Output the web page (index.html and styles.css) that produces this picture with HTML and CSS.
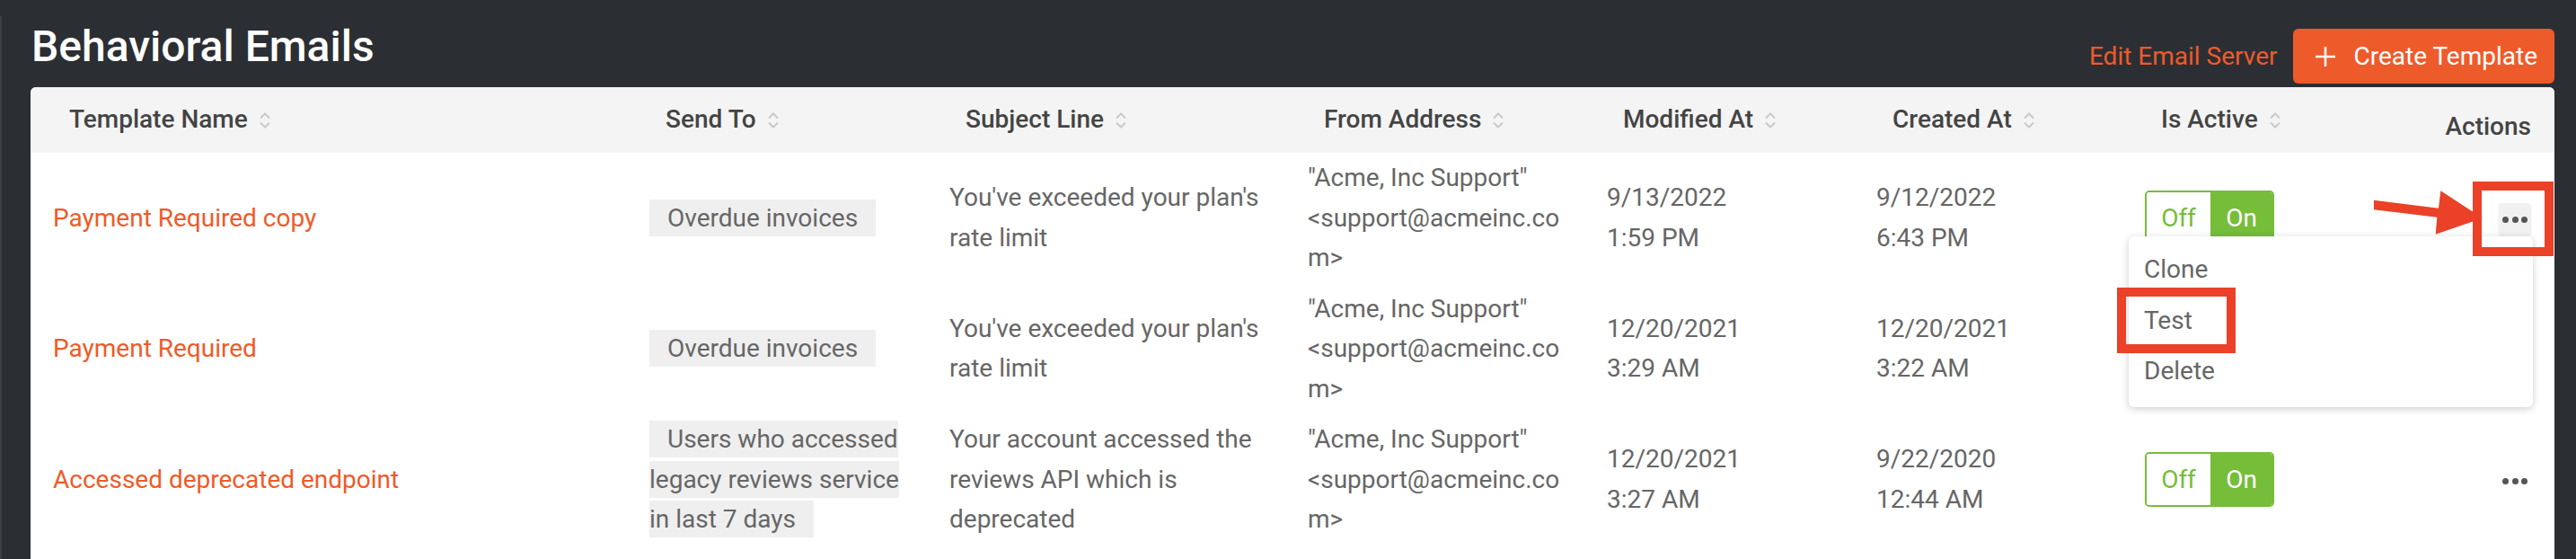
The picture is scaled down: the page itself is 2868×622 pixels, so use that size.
FILE: index.html
```html
<!DOCTYPE html>
<html lang="en">
<head>
<meta charset="utf-8">
<title>Behavioral Emails</title>
<link rel="stylesheet" href="styles.css">
</head>
<body>
<div class="app">
  <div class="rail"></div>
  <main class="main">
    <header class="topbar">
      <h1 class="title">Behavioral Emails</h1>
      <div class="top-actions">
        <a class="edit-link" href="#">Edit Email Server</a>
        <button class="btn-create" type="button">
          <svg class="plus" width="24" height="24" viewBox="0 0 24 24"><path d="M12 1v22M1 12h22" stroke="#fff" stroke-width="2.6" fill="none"/></svg>
          <span>Create Template</span>
        </button>
      </div>
    </header>

    <section class="card">
      <table class="grid">
        <colgroup>
          <col class="c-name"><col class="c-send"><col class="c-subject"><col class="c-from">
          <col class="c-mod"><col class="c-created"><col class="c-active"><col class="c-actions">
        </colgroup>
        <thead>
          <tr>
            <th>Template Name<svg class="sort" width="14" height="22" viewBox="0 0 14 22"><path d="M2 8.5L7 3.5L12 8.5M2 13.5L7 18.5L12 13.5" stroke="#c9c9c9" stroke-width="2" fill="none"/></svg></th>
            <th>Send To<svg class="sort" width="14" height="22" viewBox="0 0 14 22"><path d="M2 8.5L7 3.5L12 8.5M2 13.5L7 18.5L12 13.5" stroke="#c9c9c9" stroke-width="2" fill="none"/></svg></th>
            <th>Subject Line<svg class="sort" width="14" height="22" viewBox="0 0 14 22"><path d="M2 8.5L7 3.5L12 8.5M2 13.5L7 18.5L12 13.5" stroke="#c9c9c9" stroke-width="2" fill="none"/></svg></th>
            <th>From Address<svg class="sort" width="14" height="22" viewBox="0 0 14 22"><path d="M2 8.5L7 3.5L12 8.5M2 13.5L7 18.5L12 13.5" stroke="#c9c9c9" stroke-width="2" fill="none"/></svg></th>
            <th>Modified At<svg class="sort" width="14" height="22" viewBox="0 0 14 22"><path d="M2 8.5L7 3.5L12 8.5M2 13.5L7 18.5L12 13.5" stroke="#c9c9c9" stroke-width="2" fill="none"/></svg></th>
            <th>Created At<svg class="sort" width="14" height="22" viewBox="0 0 14 22"><path d="M2 8.5L7 3.5L12 8.5M2 13.5L7 18.5L12 13.5" stroke="#c9c9c9" stroke-width="2" fill="none"/></svg></th>
            <th>Is Active<svg class="sort" width="14" height="22" viewBox="0 0 14 22"><path d="M2 8.5L7 3.5L12 8.5M2 13.5L7 18.5L12 13.5" stroke="#c9c9c9" stroke-width="2" fill="none"/></svg></th>
            <th class="th-actions">Actions</th>
          </tr>
        </thead>
        <tbody>
          <tr>
            <td><a class="name" href="#">Payment Required copy</a></td>
            <td><span class="tag">Overdue invoices</span></td>
            <td>You've exceeded your plan's rate limit</td>
            <td>"Acme, Inc Support" &lt;support@acmeinc.com&gt;</td>
            <td>9/13/2022<br>1:59 PM</td>
            <td>9/12/2022<br>6:43 PM</td>
            <td><span class="toggle"><span class="off">Off</span><span class="on">On</span></span></td>
            <td class="td-actions">
              <span class="dots-btn open"><i></i><i></i><i></i></span>
              <div class="menu">
                <div class="menu-item">Clone</div>
                <div class="menu-item">Test</div>
                <div class="menu-item">Delete</div>
              </div>
            </td>
          </tr>
          <tr>
            <td><a class="name" href="#">Payment Required</a></td>
            <td><span class="tag">Overdue invoices</span></td>
            <td>You've exceeded your plan's rate limit</td>
            <td>"Acme, Inc Support" &lt;support@acmeinc.com&gt;</td>
            <td>12/20/2021<br>3:29 AM</td>
            <td>12/20/2021<br>3:22 AM</td>
            <td><span class="toggle covered"><span class="off">Off</span><span class="on">On</span></span></td>
            <td class="td-actions"><span class="dots-btn"><i></i><i></i><i></i></span></td>
          </tr>
          <tr>
            <td><a class="name" href="#">Accessed deprecated endpoint</a></td>
            <td><span class="tag">Users who accessed legacy reviews service in last 7 days</span></td>
            <td>Your account accessed the reviews API which is deprecated</td>
            <td>"Acme, Inc Support" &lt;support@acmeinc.com&gt;</td>
            <td>12/20/2021<br>3:27 AM</td>
            <td>9/22/2020<br>12:44 AM</td>
            <td><span class="toggle"><span class="off">Off</span><span class="on">On</span></span></td>
            <td class="td-actions"><span class="dots-btn"><i></i><i></i><i></i></span></td>
          </tr>
        </tbody>
      </table>
    </section>
  </main>
</div>

<svg class="annotations" width="2868" height="622" viewBox="0 0 2868 622">
  <rect x="2758" y="207" width="80" height="73" fill="none" stroke="#ea4128" stroke-width="10"/>
  <rect x="2362" y="325" width="122" height="63" fill="none" stroke="#ea4128" stroke-width="10"/>
  <polygon points="2643,222.7 2715,231.7 2717.3,212.3 2764,242.7 2711.7,260.7 2713.3,241.7 2643,233.3" fill="#ea4128"/>
</svg>
</body>
</html>
```

FILE: styles.css
```css
* {
  box-sizing: border-box;
}

body {
  margin: 0;
  position: relative;
  background: #2b2f33;
  font-family: Roboto, "Liberation Sans", Arial, sans-serif;
  overflow: hidden;
}

.app {
  display: flex;
  min-height: 100vh;
}

.rail {
  width: 2px;
  margin-top: 18px;
  background: #3b4046;
}

.main {
  flex: 1;
  padding: 0 24px 0 32px;
}

/* ---------- top bar ---------- */
.topbar {
  display: flex;
  align-items: flex-end;
  justify-content: space-between;
  height: 97px;
  padding-bottom: 4px;
}

.title {
  margin: 0 0 16px 1px;
  font-size: 48px;
  line-height: 50px;
  font-weight: 500;
  color: #ffffff;
}

.top-actions {
  display: flex;
  align-items: center;
  gap: 17px;
}

.edit-link {
  font-size: 28px;
  color: #ef5a2b;
  text-decoration: none;
}

.btn-create {
  display: flex;
  align-items: center;
  gap: 20px;
  height: 61px;
  padding: 0 19px 0 24px;
  border: none;
  border-radius: 6px;
  background: #ee5b2b;
  color: #ffffff;
  font-family: Roboto, "Liberation Sans", Arial, sans-serif;
  font-size: 28px;
  font-weight: 400;
}

.plus {
  display: block;
}

/* ---------- card / table ---------- */
.card {
  background: #ffffff;
  border-radius: 6px 6px 0 0;
  overflow: hidden;
  padding-bottom: 40px;
}

.grid {
  width: 100%;
  border-collapse: collapse;
  table-layout: fixed;
}

.c-name { width: 664px; }
.c-send { width: 334px; }
.c-subject { width: 399px; }
.c-from { width: 333px; }
.c-mod { width: 300px; }
.c-created { width: 299px; }
.c-active { width: 337px; }
.c-actions { width: 144px; }

.grid th {
  height: 73px;
  padding: 0 10px 0 43px;
  background: #f4f4f4;
  color: #444444;
  font-size: 28px;
  font-weight: 500;
  line-height: 44.5px;
  text-align: left;
  vertical-align: middle;
  white-space: nowrap;
}

.sort {
  margin-left: 12px;
  vertical-align: -3px;
}

.grid th.th-actions {
  padding: 16px 26px 0 0;
  text-align: right;
}

.grid td {
  padding: 6px 18px 6px 25px;
  color: #666666;
  font-size: 28px;
  line-height: 44.5px;
  vertical-align: middle;
  overflow-wrap: anywhere;
}

.name {
  color: #f05a28;
  text-decoration: none;
}

.tag {
  padding: 4px 20px;
  background: #efefef;
}

/* toggle */
.toggle {
  display: inline-flex;
  height: 61px;
  border: 2px solid #76bd3a;
  border-radius: 5px;
  overflow: hidden;
  vertical-align: middle;
  font-size: 28px;
  line-height: 1;
}

/* this toggle sits fully underneath the open actions menu */
.toggle.covered {
  visibility: hidden;
}

.toggle .off,
.toggle .on {
  display: flex;
  align-items: center;
  justify-content: center;
}

.toggle .off {
  width: 71px;
  background: #ffffff;
  color: #76bd3a;
}

.toggle .on {
  width: 69px;
  background: #76bd3a;
  color: #ffffff;
}

/* actions */
.grid td.td-actions {
  position: relative;
  padding-right: 26px;
  text-align: right;
}

.dots-btn {
  display: inline-flex;
  align-items: center;
  justify-content: center;
  gap: 3.5px;
  width: 36px;
  height: 36px;
  border-radius: 4px;
  vertical-align: middle;
}

.dots-btn i {
  width: 7px;
  height: 7px;
  border-radius: 50%;
  background: #555555;
}

.dots-btn.open {
  background: #f1f1f1;
  box-shadow: 0 1px 3px rgba(0, 0, 0, 0.08);
}

.menu {
  position: absolute;
  top: 93px;
  right: 24px;
  z-index: 2;
  width: 450px;
  padding: 9px 0 11px;
  background: #ffffff;
  border-radius: 6px;
  box-shadow: 0 2px 8px rgba(0, 0, 0, 0.2);
  text-align: left;
}

.menu-item {
  padding-left: 17px;
  font-size: 28px;
  line-height: 56.5px;
  color: #666666;
}

/* annotation overlay */
.annotations {
  position: absolute;
  top: 0;
  left: 0;
  pointer-events: none;
  z-index: 5;
}
```
